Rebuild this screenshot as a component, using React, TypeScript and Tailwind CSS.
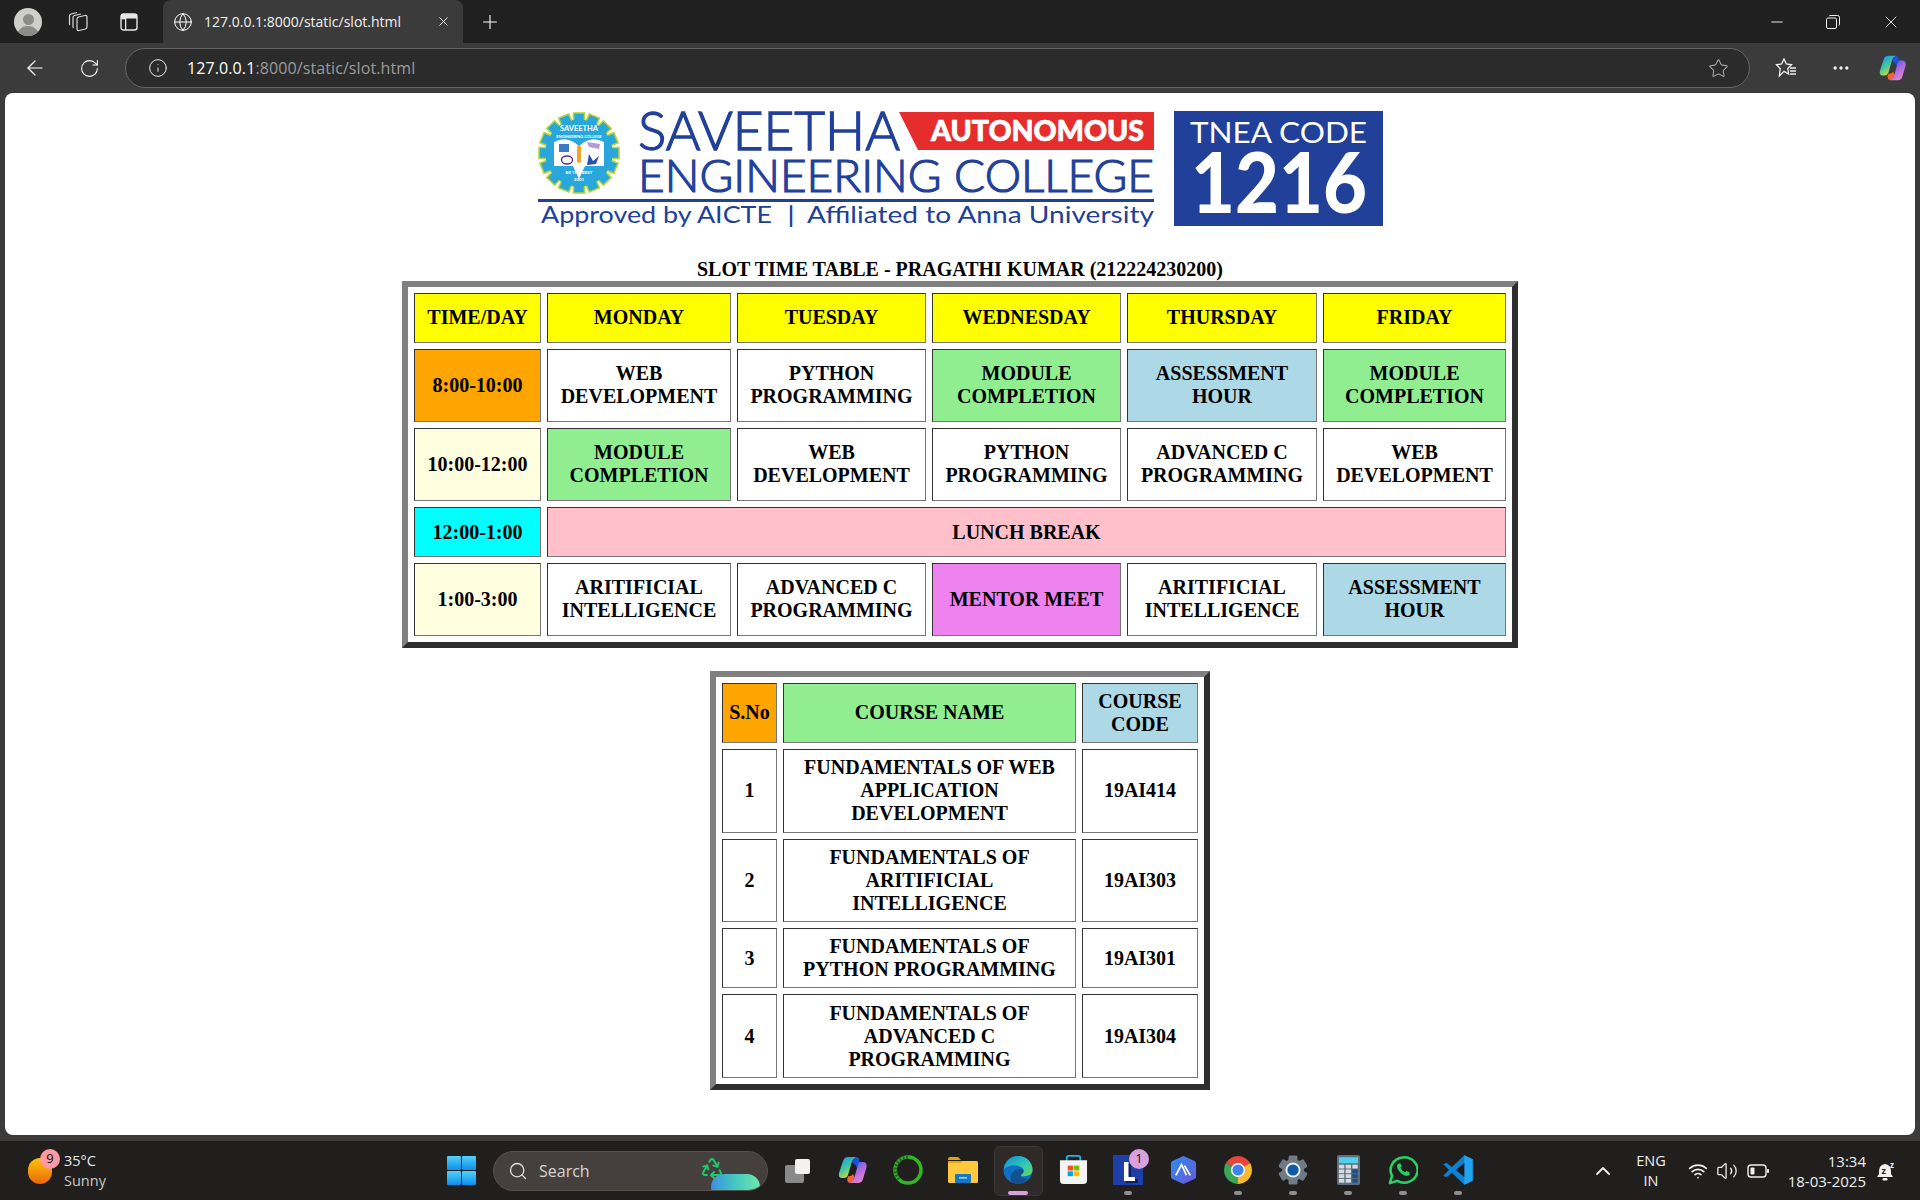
import { ArrowLeft, ChevronUp, Globe, Info, Minus, MoreHorizontal, Plus, Recycle, RotateCw, Search, Star, Volume2, Wifi, X } from 'lucide-react';
import type { ReactNode } from 'react';

const uiFont = "font-['Open_Sans',sans-serif]";

const cellClass =
  'border border-solid [border-color:#333333_#777777_#777777_#333333] px-3 text-center align-middle';

function Cell({ children, extra, span }: { children: ReactNode; extra?: string; span?: number }) {
  return (
    <td colSpan={span} className={`${cellClass} ${extra ?? ''}`}>
      {children}
    </td>
  );
}

const slotRows = [
  { h: 'h-[73px]', time: '8:00-10:00', timeColor: 'bg-[#ffa500]', cells: [
    ['WEB DEVELOPMENT', 'pb-px'],
    ['PYTHON PROGRAMMING', 'pb-px'],
    ['MODULE COMPLETION', 'pb-px bg-[#90ee90]'],
    ['ASSESSMENT HOUR', 'pb-px bg-[#add8e6]'],
    ['MODULE COMPLETION', 'pb-px bg-[#90ee90]'],
  ] },
  { h: 'h-[73px]', time: '10:00-12:00', timeColor: 'bg-[#ffffe0]', cells: [
    ['MODULE COMPLETION', 'pb-px bg-[#90ee90]'],
    ['WEB DEVELOPMENT', 'pb-px'],
    ['PYTHON PROGRAMMING', 'pb-px'],
    ['ADVANCED C PROGRAMMING', 'pb-px'],
    ['WEB DEVELOPMENT', 'pb-px'],
  ] },
];

const courses = [
  { h: 'h-[84px]', no: '1', name: 'FUNDAMENTALS OF WEB APPLICATION DEVELOPMENT', code: '19AI414', nudge: 'pb-px' },
  { h: 'h-[83px]', no: '2', name: 'FUNDAMENTALS OF ARITIFICIAL INTELLIGENCE', code: '19AI303', nudge: '' },
  { h: 'h-[60px]', no: '3', name: 'FUNDAMENTALS OF PYTHON PROGRAMMING', code: '19AI301', nudge: '' },
  { h: 'h-[84px]', no: '4', name: 'FUNDAMENTALS OF ADVANCED C PROGRAMMING', code: '19AI304', nudge: '' },
];

function SlotTable() {
  return (
    <table className="w-[1116px] table-fixed border-separate border-spacing-[6px] border-[6px] border-solid [border-color:#808080_#2e2e2e_#2e2e2e_#808080]">
      <colgroup>
        <col className="w-[127px]" />
        <col className="w-[184px]" />
        <col className="w-[189px]" />
        <col className="w-[189px]" />
        <col className="w-[190px]" />
        <col className="w-[183px]" />
      </colgroup>
      <tbody>
        <tr className="h-[50px]">
          {['TIME/DAY', 'MONDAY', 'TUESDAY', 'WEDNESDAY', 'THURSDAY', 'FRIDAY'].map((day) => (
            <Cell key={day} extra="pb-px bg-[#ffff00]">{day}</Cell>
          ))}
        </tr>
        {slotRows.map((row) => (
          <tr key={row.time} className={row.h}>
            <Cell extra={row.timeColor}>{row.time}</Cell>
            {row.cells.map(([label, extra], i) => (
              <Cell key={i} extra={extra}>{label}</Cell>
            ))}
          </tr>
        ))}
        <tr className="h-[50px]">
          <Cell extra="bg-[#00ffff]">12:00-1:00</Cell>
          <Cell extra="bg-[#ffc0cb]" span={5}>LUNCH BREAK</Cell>
        </tr>
        <tr className="h-[73px]">
          <Cell extra="bg-[#ffffe0]">1:00-3:00</Cell>
          <Cell extra="pb-px">ARITIFICIAL INTELLIGENCE</Cell>
          <Cell extra="pb-px">ADVANCED C PROGRAMMING</Cell>
          <Cell extra="bg-[#ee82ee]">MENTOR MEET</Cell>
          <Cell extra="pb-px">ARITIFICIAL INTELLIGENCE</Cell>
          <Cell extra="pb-px bg-[#add8e6]">ASSESSMENT HOUR</Cell>
        </tr>
      </tbody>
    </table>
  );
}

function CourseTable() {
  return (
    <table className="mt-[23px] w-[500px] table-fixed border-separate border-spacing-[6px] border-[6px] border-solid [border-color:#808080_#2e2e2e_#2e2e2e_#808080]">
      <colgroup>
        <col className="w-[55px]" />
        <col className="w-[293px]" />
        <col className="w-[116px]" />
      </colgroup>
      <tbody>
        <tr className="h-[60px]">
          <td className={`${cellClass} !px-0 pb-px bg-[#ffa500]`}>S.No</td>
          <Cell extra="pb-px bg-[#90ee90]">COURSE NAME</Cell>
          <Cell extra="bg-[#add8e6]">COURSE CODE</Cell>
        </tr>
        {courses.map((c) => (
          <tr key={c.no} className={c.h}>
            <Cell extra={c.nudge}>{c.no}</Cell>
            <Cell extra={c.nudge}>{c.name}</Cell>
            <td className={`${cellClass} !px-0 ${c.nudge}`}>{c.code}</td>
          </tr>
        ))}
      </tbody>
    </table>
  );
}

function CollegeLogo() {
  const blue = '#21409a';
  const teeth = Array.from({ length: 16 }, (_, i) => i * 22.5);
  return (
    <svg width="845" height="116" viewBox="0 0 845 116" className="block overflow-visible">
      <g transform="translate(41 42)">
        {teeth.map((deg) => (
          <rect key={deg} x="-5.5" y="-40" width="11" height="12" fill="#29a6dc" stroke="#b6d433" strokeWidth="1.6" transform={`rotate(${deg})`} />
        ))}
        <circle r="33.5" fill="#29a6dc" />
        <path d="M-25 -11 Q-12 -18 0 -7 Q12 -18 25 -11 L25 13 L6 13 L0 26 L-6 13 L-25 13 Z" fill="#ffffff" />
        <rect x="-20" y="-9" width="10" height="8" fill="#3a78c8" />
        <ellipse cx="-12" cy="7" rx="5.5" ry="4" fill="none" stroke="#5b2d8c" strokeWidth="1.4" />
        <path d="M10 1 L14 8 L20 3 L17 11 L8 12 Z" fill="#2d4fb0" />
        <path d="M8 -11 L21 -9 L20 -4 L10 -6 Z" fill="#b49ad6" />
        <rect x="-2" y="-8" width="4" height="18" rx="2" fill="#f2a51f" />
        <text x="0" y="-22" textAnchor="middle" fontSize="7.5" fontWeight="700" fill="#ffffff" fontFamily="Lato, sans-serif">SAVEETHA</text>
        <text x="0" y="-15" textAnchor="middle" fontSize="4" fontWeight="700" fill="#ffffff" fontFamily="Lato, sans-serif">ENGINEERING COLLEGE</text>
        <text x="0" y="21" textAnchor="middle" fontSize="4.5" fontWeight="700" fill="#ffffff" fontFamily="Lato, sans-serif">BE THE BEST</text>
        <text x="0" y="28" textAnchor="middle" fontSize="4.5" fontWeight="700" fill="#ffffff" fontFamily="Lato, sans-serif">2001</text>
      </g>
      <g fontFamily="Lato, sans-serif" fill={blue}>
        <text x="100" y="39" fontSize="53" fontWeight="300" stroke={blue} strokeWidth="1.3" textLength="262" lengthAdjust="spacingAndGlyphs">SAVEETHA</text>
        <polygon points="361,1 616,1 616,39 380,39" fill="#e52d2d" />
        <text x="393" y="30" fontSize="28" fontWeight="900" fill="#ffffff" stroke="#ffffff" strokeWidth="0.7" textLength="213" lengthAdjust="spacingAndGlyphs">AUTONOMOUS</text>
        <text x="100" y="81" fontSize="45" fontWeight="300" stroke={blue} strokeWidth="1.2" textLength="516" lengthAdjust="spacingAndGlyphs">ENGINEERING COLLEGE</text>
        <rect x="0" y="88" width="616" height="3" />
        <text x="3" y="112" fontSize="23" fontWeight="400" textLength="231" lengthAdjust="spacingAndGlyphs">Approved by AICTE</text>
        <text x="250" y="112" fontSize="23">|</text>
        <text x="269" y="112" fontSize="23" fontWeight="400" textLength="347" lengthAdjust="spacingAndGlyphs">Affiliated to Anna University</text>
        <rect x="636" y="0" width="209" height="115" />
        <text x="652" y="32" fontSize="28" fontWeight="400" fill="#ffffff" textLength="177" lengthAdjust="spacingAndGlyphs">TNEA CODE</text>
        <text x="653" y="102" fontSize="84" fontWeight="900" fill="#ffffff" textLength="176" lengthAdjust="spacingAndGlyphs">1216</text>
      </g>
    </svg>
  );
}

function CopilotIcon({ size = 30, id }: { size?: number; id: string }) {
  return (
    <svg width={size} height={size} viewBox="0 0 30 30">
      <defs>
        <linearGradient id={`${id}a`} x1="0" y1="0" x2="0.6" y2="1">
          <stop offset="0" stopColor="#1b8ff0" />
          <stop offset="0.55" stopColor="#3fc8a0" />
          <stop offset="1" stopColor="#f2d52a" />
        </linearGradient>
        <linearGradient id={`${id}b`} x1="0.2" y1="0" x2="0.8" y2="1">
          <stop offset="0" stopColor="#3a5fe0" />
          <stop offset="0.5" stopColor="#b56be0" />
          <stop offset="1" stopColor="#e889c8" />
        </linearGradient>
      </defs>
      <path d="M10 2 H19 Q15 3 13.5 8 L10 20 Q9 23 6 23 H4 Q0 23 1 18 L5 6 Q6.5 2 10 2 Z" fill={`url(#${id}a)`} />
      <path d="M20 7 H25 Q29 7 28.6 12 L25 24 Q24 28 20 28 H11 Q15 27 16.5 22 L19 13 Q19.5 9 20 7 Z" fill={`url(#${id}b)`} />
      <path d="M10 21 Q13 22 15 19 L16.5 22 Q15.5 27 11.5 28 Q8 27 10 21 Z" fill="#f0643c" />
      <path d="M14 7 Q15 3 19 2 Q22 3 21 7 L19 13 Q17 9 14 7 Z" fill="#1e4fd8" />
    </svg>
  );
}

function TaskViewIcon() {
  return (
    <svg width="30" height="30" viewBox="0 0 30 30">
      <rect x="2" y="9" width="19" height="18" rx="2" fill="#8a8a8a" />
      <rect x="12" y="3" width="15" height="15" rx="2" fill="#f2f2f2" />
    </svg>
  );
}

function RingIcon() {
  return (
    <svg width="30" height="30" viewBox="0 0 30 30">
      <circle cx="15" cy="15" r="13" fill="none" stroke="#35b526" strokeWidth="3.6" />
      <path d="M15 2 A13 13 0 0 0 6 24" fill="none" stroke="#1f6b22" strokeWidth="3.6" strokeDasharray="2 1.5" />
    </svg>
  );
}

function FolderIcon() {
  return (
    <svg width="30" height="28" viewBox="0 0 30 28">
      <path d="M0 3 Q0 1 2 1 H10 L13 4 H0 Z" fill="#e0a008" />
      <rect x="0" y="5" width="30" height="22" rx="1.5" fill="#ffc83d" />
      <path d="M0 7 H13 L15 5 H0 Z" fill="#e9a90c" />
      <rect x="7" y="18" width="16" height="9" rx="1" fill="#1478c8" />
      <rect x="11" y="21" width="8" height="1.6" fill="#9fd4f5" />
    </svg>
  );
}

function EdgeIcon() {
  return (
    <svg width="30" height="30" viewBox="0 0 32 34" preserveAspectRatio="none">
      <defs>
        <linearGradient id="edgeTop" x1="0" y1="0" x2="1" y2="1">
          <stop offset="0" stopColor="#0c8fd8" />
          <stop offset="0.6" stopColor="#34c8b0" />
          <stop offset="1" stopColor="#70d850" />
        </linearGradient>
      </defs>
      <circle cx="16" cy="17" r="15.5" fill="#0f6fc0" />
      <path d="M1 16 C2 6 9 1 16 1 C25 1 31.5 8 31.5 17 C31.5 22 27 24 22 24 C17 24 15 22 15 22 C21 22 24 18 21 15 C17 11 7 10 1 16 Z" fill="url(#edgeTop)" />
      <path d="M8 27 C8 20 13 16 18 16 C22 16 23 19 21 21 C17 24 20 28 27 26 C24 30 20 32.5 16 32.5 C12 32.5 8 31 8 27 Z" fill="#12508f" />
    </svg>
  );
}

function StoreIcon() {
  return (
    <svg width="29" height="30" viewBox="0 0 30 34" preserveAspectRatio="none">
      <path d="M8 8 V3 Q8 1 10 1 H20 Q22 1 22 3 V8" fill="none" stroke="#22b4e8" strokeWidth="1.8" />
      <path d="M1 6 H29 V29 Q29 33 25 33 H5 Q1 33 1 29 Z" fill="#f4f4f2" />
      <rect x="9" y="12" width="5.5" height="5.5" fill="#f25022" />
      <rect x="15.5" y="12" width="5.5" height="5.5" fill="#7fba00" />
      <rect x="9" y="18.5" width="5.5" height="5.5" fill="#00a4ef" />
      <rect x="15.5" y="18.5" width="5.5" height="5.5" fill="#ffb900" />
    </svg>
  );
}

function HexIcon() {
  return (
    <svg width="27" height="30" viewBox="0 0 28 34" preserveAspectRatio="none">
      <defs>
        <linearGradient id="hexFill" x1="0" y1="0" x2="1" y2="1">
          <stop offset="0" stopColor="#2f8fe8" />
          <stop offset="1" stopColor="#6a55e0" />
        </linearGradient>
      </defs>
      <path d="M14 1 L26 7 Q27 8 27 10 V24 Q27 26 26 27 L14 33 L2 27 Q1 26 1 24 V10 Q1 8 2 7 Z" fill="url(#hexFill)" />
      <path d="M6 23 L12 11 L17 23 M15 12 L21 23" fill="none" stroke="#ffffff" strokeWidth="1.8" />
    </svg>
  );
}

function ChromeIcon() {
  return (
    <svg width="30" height="30" viewBox="0 0 30 30">
      <path d="M15 15 L2.88 8 A14 14 0 0 1 27.12 8 Z" fill="#e8453c" />
      <path d="M15 15 L27.12 8 A14 14 0 0 1 15 29 Z" fill="#f9bb2d" />
      <path d="M15 15 L15 29 A14 14 0 0 1 2.88 8 Z" fill="#3aa757" />
      <circle cx="15" cy="15" r="7" fill="#ffffff" />
      <circle cx="15" cy="15" r="5.6" fill="#3f83ef" />
    </svg>
  );
}

function SettingsIcon() {
  const teeth = [0, 60, 120, 180, 240, 300];
  return (
    <svg width="30" height="30" viewBox="0 0 30 30">
      <g transform="translate(15 15)">
        {teeth.map((deg) => (
          <rect key={deg} x="-4.5" y="-14.5" width="9" height="8" rx="1.5" fill="#6f7b85" transform={`rotate(${deg})`} />
        ))}
        <circle r="11" fill="#6f7b85" />
        <circle r="7.6" fill="#e8edf0" />
        <circle r="5.6" fill="#0f5ba8" />
      </g>
    </svg>
  );
}

function CalcIcon() {
  const keys = [0, 1, 2, 3];
  return (
    <svg width="23" height="30" viewBox="0 0 24 40" preserveAspectRatio="none">
      <rect width="24" height="40" rx="2" fill="#5f6e7a" />
      <rect x="2" y="3" width="20" height="8" fill="#4fd0ee" />
      {keys.map((r) =>
        [0, 1, 2].map((c) => (
          <rect key={`${r}${c}`} x={2 + c * 7} y={13 + r * 6.3} width="5.6" height="5" fill={c === 2 && r > 0 ? '#1c4f8c' : '#d4dade'} />
        ))
      )}
    </svg>
  );
}

function WhatsAppIcon() {
  return (
    <svg width="30" height="30" viewBox="0 0 30 32" preserveAspectRatio="none">
      <path d="M2 30 L4 22 A13.5 13.5 0 1 1 9 27.5 Z" fill="none" stroke="#25d366" strokeWidth="2.6" strokeLinejoin="round" />
      <path d="M10.5 9 Q9 10 9 12.5 Q10 18 16 21.5 Q19.5 23 21.5 21 L21.5 18.5 L18.5 17 L17 18.5 Q14 17 12.5 13.5 L13.8 12 L12.5 9 Z" fill="#25d366" />
    </svg>
  );
}

function VsCodeIcon() {
  return (
    <svg width="30" height="30" viewBox="0 0 100 100" preserveAspectRatio="none">
      <path d="M71 99 L99 86 V14 L71 1 L30 40 L11 26 L1 31 L20 50 L1 69 L11 74 L30 60 Z" fill="#0f7fd0" />
      <path d="M71 1 L99 14 V86 L71 99 Z" fill="#22a3ee" />
      <path d="M71 27 L43 50 L71 73 Z" fill="#1e1a1a" />
    </svg>
  );
}

function LIcon() {
  return (
    <div className="relative">
      <svg width="30" height="30" viewBox="0 0 30 30" className="block">
        <rect width="30" height="30" fill="#1f3fa8" />
        <path d="M13 9 H18 V24 H25 V28 H13 Z" fill="#0d1f60" />
        <path d="M11 7 H15.5 V22 H22 V26 H11 Z" fill="#ffffff" />
      </svg>
      <span className={`absolute -right-[6px] -top-[6px] flex h-[20px] w-[20px] items-center justify-center rounded-full bg-[#d9a0e0] text-[13px] text-[#111111] ${uiFont}`}>
        1
      </span>
    </div>
  );
}

const taskbarApps: { key: string; icon: ReactNode; dot?: boolean; active?: boolean }[] = [
  { key: 'copilot', icon: <CopilotIcon id="tb" /> },
  { key: 'ring', icon: <RingIcon /> },
  { key: 'folder', icon: <FolderIcon /> },
  { key: 'edge', icon: <EdgeIcon />, active: true },
  { key: 'store', icon: <StoreIcon /> },
  { key: 'l', icon: <LIcon />, dot: true },
  { key: 'hex', icon: <HexIcon /> },
  { key: 'chrome', icon: <ChromeIcon />, dot: true },
  { key: 'settings', icon: <SettingsIcon />, dot: true },
  { key: 'calc', icon: <CalcIcon />, dot: true },
  { key: 'whatsapp', icon: <WhatsAppIcon />, dot: true },
  { key: 'vscode', icon: <VsCodeIcon />, dot: true },
];

function TaskbarApp({ icon, dot, active }: { icon: ReactNode; dot?: boolean; active?: boolean }) {
  return (
    <div className="relative flex h-[50px] w-[55px] items-center justify-center">
      {active && (
        <div className="absolute inset-y-0 left-[3px] w-[49px] rounded-md border border-[#3d3735] bg-[#2f2a28]" />
      )}
      <div className="relative -mt-[1px] flex items-center justify-center">{icon}</div>
      {dot && <div className="absolute bottom-[1px] h-[4px] w-[8px] rounded-full bg-[#8f8f8f]" />}
      {active && <div className="absolute bottom-[1px] h-[4px] w-[20px] rounded-full bg-[#d9a0e0]" />}
    </div>
  );
}

function TabBar() {
  return (
    <div className="flex h-[43px] shrink-0 items-center bg-[#202020] text-white">
      <div className="ml-[14px] flex h-[28px] w-[28px] flex-col items-center justify-end overflow-hidden rounded-full bg-[#cfcfca]">
        <div className="mb-[1px] h-[11px] w-[11px] rounded-full bg-[#8d8d88]" />
        <div className="h-[10px] w-[22px] rounded-t-full bg-[#8d8d88]" />
      </div>
      <svg width="24" height="24" viewBox="0 0 24 24" fill="none" stroke="#dddddd" strokeWidth="1.2" className="ml-[24px]">
        <path d="M11 9 Q11 7.5 12.5 7 L19 5.5 Q21 5.2 21 7 V17 Q21 18.5 19.5 19 L13 20.5 Q11 20.8 11 19 Z" />
        <path d="M7.5 18 Q7 17.5 7 16.5 V7.5 Q7 6 8.5 5.5 L15 4" />
        <path d="M4 15 Q3.5 14.5 3.5 13.5 V6 Q3.5 4.5 5 4 L11 2.5" />
      </svg>
      <svg width="18" height="18" viewBox="0 0 18 18" className="ml-[30px]">
        <rect x="1" y="1" width="16" height="16" rx="2.5" fill="none" stroke="#e6e6e6" strokeWidth="1.4" />
        <rect x="1" y="1" width="16" height="4.5" fill="#e6e6e6" />
        <rect x="1" y="5" width="5" height="1.3" fill="#e6e6e6" />
        <rect x="5" y="5" width="1.3" height="12" fill="#e6e6e6" />
      </svg>
      <div className={`ml-[25px] flex h-[43px] w-[300px] items-center rounded-t-lg bg-[#3b3b3b] pl-[10px] ${uiFont}`}>
        <Globe size={20} strokeWidth={1.2} />
        <span className="ml-[11px] w-[232px] text-[14px] text-[#f0f0f0]">127.0.0.1:8000/static/slot.html</span>
        <X size={15} strokeWidth={1.4} />
      </div>
      <Plus size={22} strokeWidth={1.2} className="ml-[16px]" />
      <div className="flex-1" />
      <Minus size={18} strokeWidth={1.2} />
      <svg width="14" height="14" viewBox="0 0 14 14" fill="none" stroke="#eeeeee" strokeWidth="1" className="ml-[40px]">
        <rect x="0.5" y="3" width="10" height="10.5" rx="1.5" />
        <path d="M3 1 Q3.5 0.5 5 0.5 H11.5 Q13.5 0.5 13.5 2.5 V9 Q13.5 10 13 10.5" />
      </svg>
      <X size={20} strokeWidth={1} className="ml-[41px] mr-[19px]" />
    </div>
  );
}

function ToolBar() {
  return (
    <div className="flex h-[50px] shrink-0 items-center bg-[#3b3b3b] text-white">
      <ArrowLeft size={24} strokeWidth={1.2} className="ml-[23px]" />
      <RotateCw size={21} strokeWidth={1.2} className="ml-[32px]" />
      <div className={`ml-[25px] flex h-[40px] w-[1625px] items-center rounded-full border border-[#666666] bg-[#2b2b2b] pl-[22px] pr-[20px] ${uiFont}`}>
        <Info size={20} strokeWidth={1.2} className="text-[#e6e6e6]" />
        <span className="ml-[19px] text-[16px] tracking-[0.1px] text-white">
          127.0.0.1<span className="text-[#9b9b9b]">:8000/static/slot.html</span>
        </span>
        <div className="flex-1" />
        <Star size={21} strokeWidth={1.2} className="text-[#a6a6a6]" />
      </div>
      <svg width="22" height="22" viewBox="0 0 22 22" fill="none" stroke="#f0f0f0" strokeWidth="1.3" className="ml-[25px]">
        <path d="M9 2 L11.4 7 L16.5 7.8 L12.8 11.5 L13.6 17 L9 14.4 L4.4 19 L5.2 11.5 L1.5 7.8 L6.6 7 Z" />
        <path d="M15 11 H21 M15 14 H21 M15 17 H21" />
      </svg>
      <MoreHorizontal size={20} strokeWidth={2} className="ml-[34px] text-[#f0f0f0]" />
      <div className="ml-[28px]">
        <CopilotIcon id="tool" size={28} />
      </div>
    </div>
  );
}

function Taskbar() {
  return (
    <div className={`flex h-[59px] shrink-0 items-center bg-[#201f1d] text-white ${uiFont}`}>
      <div className="flex w-[447px] items-center pl-[28px]">
        <div className="relative h-[26px] w-[24px] rounded-full bg-gradient-to-b from-[#ffc400] to-[#e8650a]">
          <span className="absolute -right-[8px] -top-[9px] flex h-[20px] w-[20px] items-center justify-center rounded-full bg-[#ff9aa2] text-[13px] text-[#111111]">
            9
          </span>
        </div>
        <div className="ml-[12px] text-[14.5px] leading-[20px] text-[#e8e8e8]">
          <div>35°C</div>
          <div className="text-[#c8c8c8]">Sunny</div>
        </div>
      </div>
      <svg width="29" height="29" viewBox="0 0 29 29">
        <defs>
          <linearGradient id="winFill" x1="0" y1="0" x2="0" y2="1">
            <stop offset="0" stopColor="#55d0f8" />
            <stop offset="1" stopColor="#0a8fee" />
          </linearGradient>
        </defs>
        <rect x="0" y="0" width="14" height="14" rx="1" fill="url(#winFill)" />
        <rect x="15" y="0" width="14" height="14" rx="1" fill="url(#winFill)" />
        <rect x="0" y="15" width="14" height="14" rx="1" fill="url(#winFill)" />
        <rect x="15" y="15" width="14" height="14" rx="1" fill="url(#winFill)" />
      </svg>
      <div className="ml-[17px] flex h-[40px] w-[275px] items-center overflow-hidden rounded-full border border-[#55504e] bg-[#45403e] pl-[14px]">
        <Search size={20} strokeWidth={1.6} className="text-[#e0e0e0]" />
        <span className="ml-[11px] text-[16px] text-[#d6d6d6]">Search</span>
        <div className="flex-1" />
        <div className="relative h-[38px] w-[75px]">
          <Recycle size={24} strokeWidth={2} className="absolute left-[8px] top-[4px] text-[#1fc66a]" />
          <div className="absolute left-[19px] top-[22px] h-[26px] w-[49px] rounded-full bg-gradient-to-r from-[#3f8fe0] via-[#45c8c0] to-[#6fe8a8]" />
        </div>
      </div>
      <div className="ml-[2.5px] flex h-[50px] w-[55px] items-center justify-center">
        <TaskViewIcon />
      </div>
      {taskbarApps.map((app) => (
        <TaskbarApp key={app.key} icon={app.icon} dot={app.dot} active={app.active} />
      ))}
      <ChevronUp size={24} strokeWidth={1.8} className="ml-[105.5px] text-[#f0f0f0]" />
      <div className="ml-[16px] w-[40px] text-center text-[14.5px] leading-[20px] text-[#eeeeee]">
        <div>ENG</div>
        <div>IN</div>
      </div>
      <Wifi size={20} strokeWidth={2} className="ml-[17px] text-[#f0f0f0]" />
      <Volume2 size={22} strokeWidth={1.4} className="ml-[8px] text-[#f0f0f0]" />
      <svg width="22" height="14" viewBox="0 0 22 14" fill="none" className="ml-[9px]">
        <rect x="1" y="1" width="18" height="12" rx="3" stroke="#f0f0f0" strokeWidth="1.4" />
        <rect x="3.5" y="3.5" width="4" height="7" rx="1" fill="#f0f0f0" />
        <rect x="20" y="5" width="2" height="4" rx="1" fill="#f0f0f0" />
      </svg>
      <div className="ml-[7px] w-[90px] text-right text-[15px] leading-[20px] text-[#eeeeee]">
        <div>13:34</div>
        <div>18-03-2025</div>
      </div>
      <svg width="20" height="22" viewBox="0 0 20 22" className="ml-[10px] overflow-visible">
        <path d="M9 4 Q3 5 3 11 V14 L1 17 H17 L15 14 V11 Q15 5 9 4 Z" fill="#f0f0f0" />
        <rect x="6.5" y="18" width="5" height="2.5" rx="1.2" fill="#f0f0f0" />
        <text x="5.5" y="14" fontSize="9" fontWeight="700" fill="#201f1d" fontFamily="Open Sans, sans-serif">z</text>
        <text x="14" y="8" fontSize="8" fontWeight="700" fill="#f0f0f0" fontFamily="Open Sans, sans-serif">z</text>
      </svg>
    </div>
  );
}

export default function App() {
  return (
    <div className="flex h-[1200px] w-[1920px] flex-col overflow-hidden bg-[#3b3b3b]">
      <TabBar />
      <ToolBar />
      <main className="mx-[5px] mb-[6px] flex flex-1 flex-col items-center rounded-lg bg-white pt-[18px] font-['Liberation_Serif',serif] text-[20px] font-bold leading-[23px] text-black">
        <CollegeLogo />
        <h1 className="mt-[31px] text-[20px] font-bold">SLOT TIME TABLE - PRAGATHI KUMAR (212224230200)</h1>
        <SlotTable />
        <CourseTable />
      </main>
      <Taskbar />
    </div>
  );
}
